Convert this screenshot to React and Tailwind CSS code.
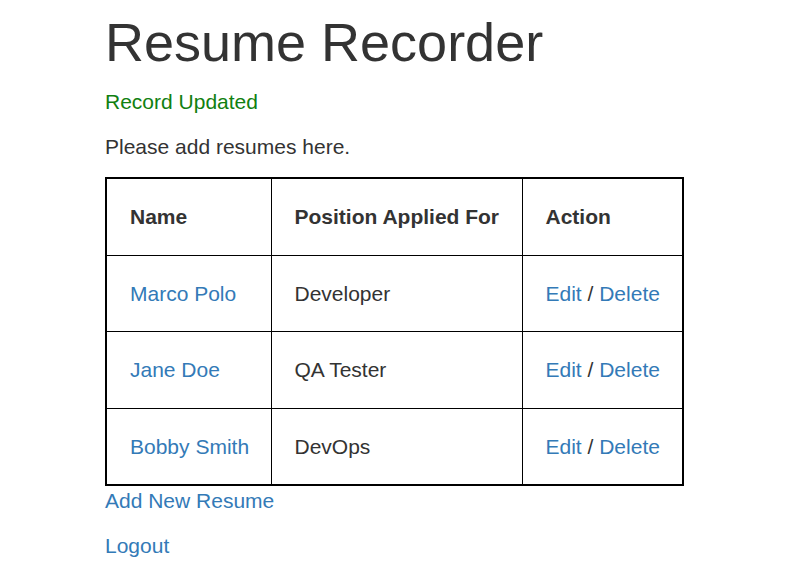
import React from 'react';

const resumes = [
  { name: 'Marco Polo', position: 'Developer' },
  { name: 'Jane Doe', position: 'QA Tester' },
  { name: 'Bobby Smith', position: 'DevOps' },
];

const App = () => {
  return (
    <div className="min-h-screen bg-white text-[#333333] text-[21px] leading-[30px]" style={{ fontFamily: '"Liberation Sans", Arial, sans-serif' }}>
      <div className="pl-[105px]">
        <h1 className="mt-[13px] mb-[15px] text-[54px] leading-[1.1]">Resume Recorder</h1>
        <p className="mb-[15px] text-[#108010]">Record Updated</p>
        <p className="mb-[15px]">Please add resumes here.</p>
        <table className="w-[577px] table-fixed border-collapse border-2 border-black whitespace-nowrap">
          <thead>
            <tr>
              <th className="w-[165px] border border-black px-[23px] py-[22.75px] text-left font-bold">Name</th>
              <th className="w-[251px] border border-black px-[23px] py-[22.75px] text-left font-bold">Position Applied For</th>
              <th className="w-[161px] border border-black px-[23px] py-[22.75px] text-left font-bold">Action</th>
            </tr>
          </thead>
          <tbody>
            {resumes.map((r) => (
              <tr key={r.name}>
                <td className="border border-black px-[23px] py-[22.75px]">
                  <a href="#" className="text-[#337ab7]">{r.name}</a>
                </td>
                <td className="border border-black px-[23px] py-[22.75px]">{r.position}</td>
                <td className="border border-black px-[23px] py-[22.75px]">
                  <a href="#" className="text-[#337ab7]">Edit</a> / <a href="#" className="text-[#337ab7]">Delete</a>
                </td>
              </tr>
            ))}
          </tbody>
        </table>
        <p className="mb-[15px]">
          <a href="#" className="text-[#337ab7]">Add New Resume</a>
        </p>
        <p>
          <a href="#" className="text-[#337ab7]">Logout</a>
        </p>
      </div>
    </div>
  );
};

export default App;
